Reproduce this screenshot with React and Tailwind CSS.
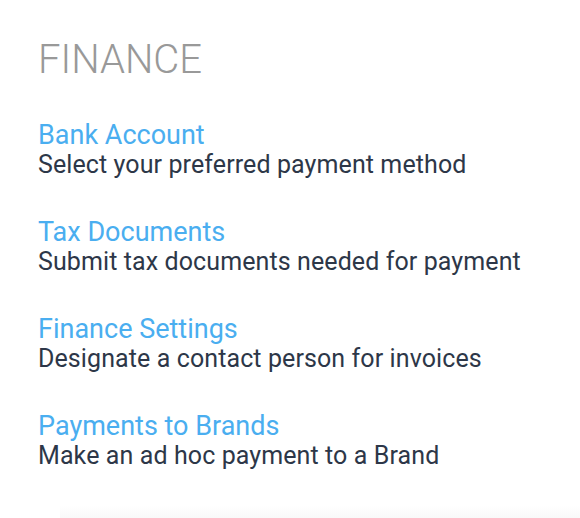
import React from 'react';

const items = [
  { title: 'Bank Account', desc: 'Select your preferred payment method' },
  { title: 'Tax Documents', desc: 'Submit tax documents needed for payment' },
  { title: 'Finance Settings', desc: 'Designate a contact person for invoices' },
  { title: 'Payments to Brands', desc: 'Make an ad hoc payment to a Brand' },
];

const App = () => {
  return (
    <div className="w-[580px] h-[518px] bg-white overflow-hidden flex flex-col font-['Roboto',sans-serif]">
      <div className="flex-1 pl-[38px] pt-[38px]">
        <h1 className="text-[40px] leading-[44px] font-light text-[#999999]">FINANCE</h1>
        <div className="mt-[38px] flex flex-col gap-[37px]">
          {items.map((item) => (
            <div key={item.title} className="flex flex-col">
              <a href="#" className="text-[27px] leading-[30px] text-[#4aaef0]">
                {item.title}
              </a>
              <p className="text-[25px] leading-[30px] tracking-[0.1px] text-[#2d3748]">{item.desc}</p>
            </div>
          ))}
        </div>
      </div>
      <div className="h-[12px] ml-[60px] bg-gradient-to-b from-white to-[#f9f9f9]" />
    </div>
  );
};

export default App;
